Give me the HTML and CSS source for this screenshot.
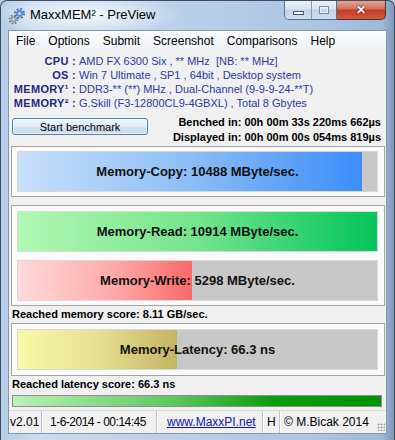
FILE: index.html
```html
<!DOCTYPE html>
<html lang="en">
<head>
    <meta charset="UTF-8">
    <title>MaxxMEM² - PreView</title>
    <link rel="stylesheet" href="styles.css">
</head>
<body>
<div class="window">
    <div class="titlebar">
        <svg class="app-icon" width="18" height="18" viewBox="0 0 18 18">
            <circle cx="11.5" cy="6.5" r="4.3" fill="none" stroke="#3b6cb8" stroke-width="2.4" stroke-dasharray="1.7 1.7"/>
            <circle cx="11.5" cy="6.5" r="3.4" fill="#5b8ed6"/>
            <circle cx="11.5" cy="6.5" r="1.3" fill="#e4edf8"/>
            <circle cx="5.5" cy="12.5" r="3.8" fill="none" stroke="#6f7a86" stroke-width="2.2" stroke-dasharray="1.5 1.5"/>
            <circle cx="5.5" cy="12.5" r="3" fill="#98a3ae"/>
            <circle cx="5.5" cy="12.5" r="1.1" fill="#eef1f4"/>
        </svg>
        <span class="title">MaxxMEM² - PreView</span>
        <div class="caption">
            <div class="cap-group">
                <div class="cap-btn cap-min"><span></span></div>
                <div class="cap-btn cap-max"><span></span></div>
            </div>
            <div class="cap-close">✕</div>
        </div>
    </div>

    <div class="client">
        <div class="menubar">
            <span>File</span>
            <span>Options</span>
            <span>Submit</span>
            <span>Screenshot</span>
            <span>Comparisons</span>
            <span>Help</span>
        </div>

        <div class="info">
            <div class="info-row"><span class="label">CPU :</span><span class="value">AMD FX 6300 Six , ** MHz &nbsp;[NB: ** MHz]</span></div>
            <div class="info-row"><span class="label">OS :</span><span class="value">Win 7 Ultimate , SP1 , 64bit , Desktop system</span></div>
            <div class="info-row"><span class="label">MEMORY¹ :</span><span class="value">DDR3-** (**) MHz , Dual-Channel (9-9-9-24-**T)</span></div>
            <div class="info-row"><span class="label">MEMORY² :</span><span class="value">G.Skill (F3-12800CL9-4GBXL) , Total 8 Gbytes</span></div>
        </div>

        <div class="bench">
            <button class="start-btn">Start benchmark</button>
            <div class="times">
                <div>Benched in: 00h 00m 33s 220ms 662µs</div>
                <div>Displayed in: 00h 00m 00s 054ms 819µs</div>
            </div>
        </div>

        <div class="panel panel-copy">
            <div class="bar">
                <div class="fill fill-copy" style="width: 95.8%"></div>
                <div class="bar-label">Memory-Copy: 10488 MByte/sec.</div>
            </div>
        </div>

        <div class="panel panel-rw">
            <div class="bar">
                <div class="fill fill-read" style="width: 100%"></div>
                <div class="bar-label">Memory-Read: 10914 MByte/sec.</div>
            </div>
            <div class="bar">
                <div class="fill fill-write" style="width: 48.5%"></div>
                <div class="bar-label">Memory-Write: 5298 MByte/sec.</div>
            </div>
        </div>

        <div class="score score-mem">Reached memory score: 8.11 GB/sec.</div>

        <div class="panel panel-lat">
            <div class="bar">
                <div class="fill fill-lat" style="width: 44.3%"></div>
                <div class="bar-label">Memory-Latency: 66.3 ns</div>
            </div>
        </div>

        <div class="score score-lat">Reached latency score: 66.3 ns</div>

        <div class="progress"></div>

        <div class="statusbar">
            <div class="cell cell-ver">v2.01</div>
            <div class="cell cell-date">1-6-2014 - 00:14:45</div>
            <div class="cell cell-link"><a href="#">www.MaxxPI.net</a></div>
            <div class="cell cell-h">H</div>
            <div class="cell cell-copy">© M.Bicak 2014</div>
            <div class="grip"></div>
        </div>
    </div>
</div>
</body>
</html>
```

FILE: styles.css
```css
body {
    margin: 0;
    background: #b6cce6;
    font-family: "Liberation Sans", Arial, sans-serif;
}

.window {
    width: 395px;
    height: 440px;
    box-sizing: border-box;
    display: flex;
    flex-direction: column;
    padding-bottom: 6px;
    border: 1px solid #3d4e64;
    border-bottom: none;
    border-radius: 7px 7px 0 0;
    overflow: hidden;
    background:
        radial-gradient(ellipse 95px 22px at 85px 14px, rgba(255,255,255,0.85), rgba(255,255,255,0) 100%),
        linear-gradient(90deg, #b4cbe6 0%, #c9dbef 8%, #bcd2eb 40%, #acc5e3 80%, #9fb9d9 97%, #7f98b8 100%);
}

/* title bar */
.titlebar {
    height: 29px;
    display: flex;
    align-items: flex-start;
    flex-shrink: 0;
}

.app-icon {
    margin: 6px 0 0 7px;
}

.title {
    margin: 6px 0 0 4px;
    font-size: 13px;
    color: #000;
    line-height: 16px;
}

.caption {
    margin-left: auto;
    margin-right: 8px;
    display: flex;
}

.cap-group {
    display: flex;
    border: 1px solid #5d6e86;
    border-top: none;
    border-radius: 0 0 0 5px;
    overflow: hidden;
}

.cap-btn {
    height: 18px;
    display: flex;
    align-items: center;
    justify-content: center;
    background: linear-gradient(#e9f0f8, #d7e3f1 45%, #c2d3e8 50%, #cfdcec);
}

.cap-min {
    width: 26px;
    border-right: 1px solid #8799b0;
}

.cap-max {
    width: 24px;
}

.cap-min span {
    width: 9px;
    height: 2px;
    margin-top: 5px;
    background: #fff;
    border: 1px solid #4a5a70;
}

.cap-max span {
    width: 8px;
    height: 6px;
    border: 1px solid #7b8ba0;
    box-shadow: inset 0 0 0 1px #e8eef6;
}

.cap-close {
    width: 48px;
    height: 18px;
    border: 1px solid #5a2a25;
    border-top: none;
    border-left: none;
    border-radius: 0 0 5px 0;
    background: linear-gradient(#e4a194, #d0725f 45%, #c23a24 50%, #d15a40);
    color: #fff;
    font-size: 12px;
    font-weight: bold;
    text-align: center;
    line-height: 18px;
    text-shadow: 0 0 2px #5a1a10, 0 0 1px #5a1a10;
}

/* client area */
.client {
    flex: 1;
    margin: 0 7px;
    display: flex;
    flex-direction: column;
    background: #f0f0f0;
    border: 1px solid #8497b0;
    font-size: 11px;
}

.menubar {
    height: 19px;
    display: flex;
    align-items: center;
    background: linear-gradient(#fbfcfe, #eef2f8);
    font-size: 12px;
    color: #000;
}

.menubar span {
    padding: 0 6.5px;
}

.menubar span:first-child {
    padding-left: 7px;
}

.info {
    padding-top: 4px;
}

.info-row {
    display: flex;
    height: 14px;
    line-height: 14px;
}

.label {
    width: 67px;
    text-align: right;
    font-weight: bold;
    color: #1c2a82;
    letter-spacing: 0.3px;
}

.value {
    margin-left: 3px;
    color: #2a3aa2;
}

.bench {
    margin-top: 4px;
    display: flex;
    justify-content: space-between;
}

.start-btn {
    margin: 4px 0 0 3px;
    width: 136px;
    height: 17px;
    padding: 0;
    border: 1px solid #4f83ad;
    border-radius: 3px;
    background: linear-gradient(#eef5fb, #e0ebf5 50%, #d2e1ef 50%, #cddcec);
    font-family: "Liberation Sans", Arial, sans-serif;
    font-size: 11px;
    color: #000;
    box-shadow: inset 0 0 0 1px rgba(255,255,255,0.6);
}

.times {
    padding: 1px 5px 0 0;
    text-align: right;
    font-weight: bold;
    color: #000;
    line-height: 15px;
}

/* bar panels */
.panel {
    margin: 1px 1px 0 2px;
    padding: 4px 6px 4px 5px;
    border: 1px solid #a3a3a3;
    background: #fafafa;
    display: flex;
    flex-direction: column;
    gap: 8px;
}

.panel-rw {
    margin-top: 8px;
    padding-top: 5px;
}

.panel-lat {
    padding: 5px 6px 5px 5px;
    margin-top: 0;
}

.bar {
    position: relative;
    height: 41px;
    background: #c8c8c8;
    box-sizing: border-box;
    border: 1px solid #d8d8d8;
}

.fill {
    height: 100%;
}

.fill-copy {
    background: linear-gradient(90deg, #c9e0fa, #8cbdf6 50%, #3b8dfb);
}

.fill-read {
    background: linear-gradient(90deg, #b2f8b2, #74e48e 50%, #02c55a);
}

.fill-write {
    background: linear-gradient(90deg, #ffd9d9, #ffa9a9 55%, #f86a6a);
}

.fill-lat {
    background: linear-gradient(90deg, #f9f9a8, #e6e08e 50%, #c4b464);
}

.bar-label {
    position: absolute;
    top: 0;
    left: 0;
    right: 0;
    bottom: 0;
    display: flex;
    align-items: center;
    justify-content: center;
    font-size: 13px;
    font-weight: bold;
    color: #111;
}

.score {
    padding-left: 3px;
    font-weight: bold;
    color: #000;
}

.score-mem {
    height: 17px;
    line-height: 17px;
}

.score-lat {
    height: 16px;
    line-height: 16px;
}

.progress {
    margin: 3px 4px 0 3px;
    height: 12px;
    box-sizing: border-box;
    border: 1px solid #8e8e8e;
    background: linear-gradient(90deg, #b8f2b8, #62c862 42%, #0a9a0a 72%, #009400);
}

/* status bar */
.statusbar {
    margin-top: 3px;
    height: 22px;
    display: flex;
    align-items: center;
    border-top: 1px solid #dadada;
    font-size: 12px;
    color: #000;
}

.cell {
    height: 100%;
    box-sizing: border-box;
    display: flex;
    align-items: center;
    border-right: 1px solid #c2c2c2;
    box-shadow: 1px 0 0 #fff;
    white-space: nowrap;
}

.cell-ver {
    width: 33px;
    padding-left: 1px;
}

.cell-date {
    width: 115px;
    padding-left: 8px;
    letter-spacing: -0.5px;
}

.cell-link {
    width: 106px;
    padding-left: 10px;
}

.cell-link a {
    color: #0b16c8;
}

.cell-h {
    width: 17px;
    padding-left: 4px;
}

.cell-copy {
    flex: 1;
    padding-left: 4px;
    border-right: none;
    box-shadow: none;
}

.grip {
    width: 8px;
    height: 8px;
    margin: 10px 1px 0 0;
    background: radial-gradient(circle, #a0a0a0 0.8px, transparent 1.2px) 0 0 / 3px 3px;
}
```
